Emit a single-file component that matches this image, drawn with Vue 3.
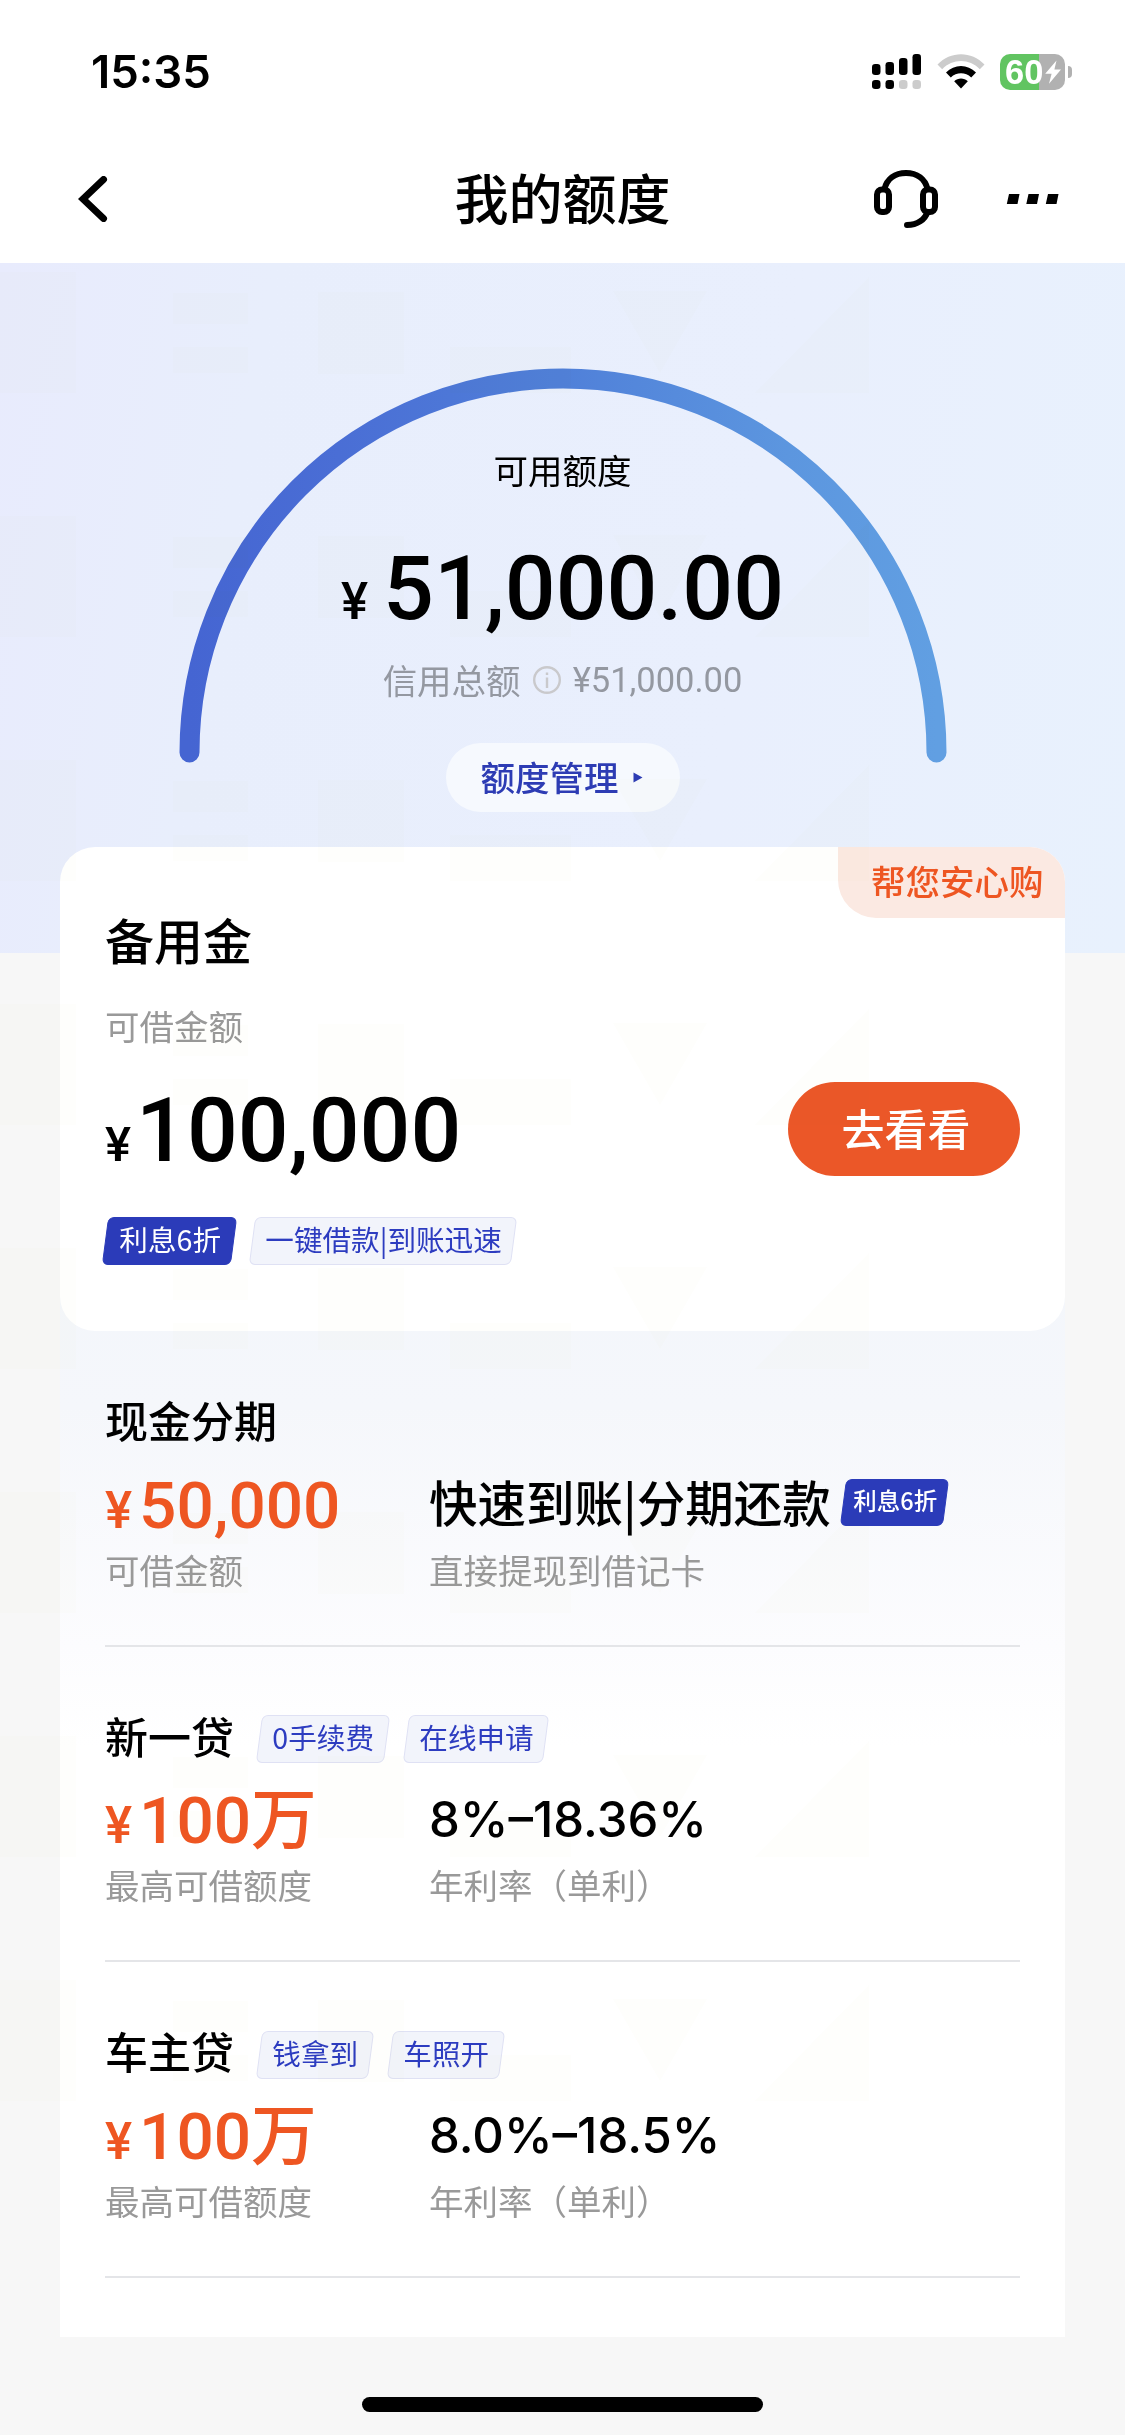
<script setup>
import { ref } from 'vue';

const signalBars = [11, 13, 17, 21];

const quota = ref({
  available: '51,000.00',
  total: '¥51,000.00',
});

const offers = ref([
  {
    name: '现金分期',
    tags: [],
    amount: '50,000',
    amountLabel: '可借金额',
    desc: '快速到账|分期还款',
    badge: '利息6折',
    descLabel: '直接提现到借记卡',
  },
  {
    name: '新一贷',
    tags: ['0手续费', '在线申请'],
    amount: '100万',
    amountLabel: '最高可借额度',
    rate: '8%–18.36%',
    descLabel: '年利率（单利）',
  },
  {
    name: '车主贷',
    tags: ['钱拿到', '车照开'],
    amount: '100万',
    amountLabel: '最高可借额度',
    rate: '8.0%–18.5%',
    descLabel: '年利率（单利）',
  },
]);
</script>

<template>
  <div class="page">
    <!-- Status bar -->
    <div class="status-bar">
      <span class="time">15:35</span>
      <div class="status-icons">
        <svg class="signal" viewBox="0 0 49 35">
          <rect
            v-for="(h, i) in signalBars"
            :key="'bar' + i"
            :x="i * 13.5"
            :y="21 - h"
            width="8.5"
            :height="h"
            rx="3.2"
          />
          <rect
            v-for="i in 4"
            :key="'dot' + i"
            :x="(i - 1) * 13.5"
            y="26"
            width="8.5"
            height="9"
            rx="3.2"
            :class="{ off: i > 2 }"
          />
        </svg>
        <svg class="wifi" viewBox="0 0 48 36">
          <path class="off" d="M0.5 10.6C13.5-3.3 34.5-3.3 47.5 10.6L42.8 15.2C32.4 4.4 15.6 4.4 5.2 15.2Z" />
          <path d="M9 18.6C17.3 9.9 30.7 9.9 39 18.6L34.2 23.5C28.5 17.9 19.5 17.9 13.8 23.5Z" />
          <path d="M17.2 27.2C21 23.6 27 23.6 30.8 27.2L24 34.5Z" />
        </svg>
        <div class="battery">
          <span class="battery-num">60</span>
          <svg class="bolt" viewBox="0 0 16 24">
            <path d="M11.5 0.5L0.2 13.8H6.6L4 23.8L16 9.6H9.4Z" />
          </svg>
        </div>
        <span class="battery-cap"></span>
      </div>
    </div>

    <!-- Nav -->
    <div class="nav">
      <svg class="back" viewBox="0 0 30 46">
        <path d="M25.5 3.5L5 23L25.5 42.5" />
      </svg>
      <h1 class="nav-title">我的额度</h1>
      <div class="nav-actions">
        <svg class="headset" viewBox="0 0 66 60">
          <rect x="4" y="20.5" width="12" height="22.5" rx="5" />
          <rect x="50" y="20.5" width="12" height="22.5" rx="5" />
          <path d="M11.5 20C14 10 22 4 33 4S52 10 54.5 20" />
          <path d="M54.5 43C52 50.5 44.5 56 34 56" />
        </svg>
        <svg class="more" viewBox="0 0 54 12">
          <path d="M3 1H13.5L11.5 11H0.8ZM22.5 1H33L31 11H20.3ZM42 1H52.5L50.5 11H39.8Z" />
        </svg>
      </div>
    </div>

    <!-- Quota gauge -->
    <section class="hero">
      <div class="gauge">
        <svg class="arc" viewBox="0 0 768 395">
          <defs>
            <linearGradient id="arcColor" x1="0" y1="0" x2="1" y2="0">
              <stop offset="0" stop-color="#4565d2" />
              <stop offset="0.2" stop-color="#4a6ed5" />
              <stop offset="0.5" stop-color="#5080d9" />
              <stop offset="0.8" stop-color="#5c96df" />
              <stop offset="1" stop-color="#619fe2" />
            </linearGradient>
          </defs>
          <path d="M10.5 384.5A373.5 374 0 0 1 757.5 384.5" stroke="url(#arcColor)" />
        </svg>
        <div class="gauge-body">
          <div class="gauge-label">可用额度</div>
          <div class="gauge-amount"><span class="yen">¥</span>{{ quota.available }}</div>
          <div class="gauge-total">
            <span>信用总额</span>
            <svg class="info" viewBox="0 0 28 28">
              <circle cx="14" cy="14" r="12.8" />
              <path d="M14 11.5V22" />
              <path d="M14 6.5V9" />
            </svg>
            <span class="total-num">{{ quota.total }}</span>
          </div>
          <button class="manage">
            额度管理
            <svg viewBox="0 0 10 11"><path d="M0.5 0.5L9.5 5.5L0.5 10.5Z" /></svg>
          </button>
        </div>
      </div>
    </section>

    <main class="panel">
      <!-- Reserve fund -->
      <section class="card">
        <div class="ribbon">帮您安心购</div>
        <h2 class="card-title">备用金</h2>
        <div class="card-label">可借金额</div>
        <div class="card-row">
          <div class="card-amount"><span class="yen">¥</span>100,000</div>
          <button class="go">去看看</button>
        </div>
        <div class="tags">
          <span class="tag solid"><i>利息6折</i></span>
          <span class="tag"><i>一键借款|到账迅速</i></span>
        </div>
      </section>

      <!-- Offers -->
      <section v-for="offer in offers" :key="offer.name" class="offer">
        <div class="offer-head">
          <h3 class="offer-name">{{ offer.name }}</h3>
          <span v-for="tag in offer.tags" :key="tag" class="tag"><i>{{ tag }}</i></span>
        </div>
        <div class="offer-grid">
          <div class="offer-amount"><span class="yen">¥</span>{{ offer.amount }}</div>
          <div v-if="offer.rate" class="offer-rate">{{ offer.rate }}</div>
          <div v-else class="offer-desc">
            {{ offer.desc }}
            <span class="tag solid small"><i>{{ offer.badge }}</i></span>
          </div>
          <div class="offer-label">{{ offer.amountLabel }}</div>
          <div class="offer-label">{{ offer.descLabel }}</div>
        </div>
      </section>
    </main>

    <div class="home-bar"></div>

    <!-- Faint repeating background marks -->
    <svg class="marks" viewBox="0 0 1125 2172">
      <defs>
        <pattern id="mark" width="1125" height="244" y="-27" patternUnits="userSpaceOnUse">
          <rect x="0" y="36" width="76" height="121" />
          <rect x="173" y="57" width="75" height="31" />
          <rect x="173" y="111" width="75" height="26" />
          <rect x="318" y="56" width="86" height="82" />
          <rect x="450" y="111" width="121" height="46" />
          <path d="M613 55H707L660 137Z" />
          <path d="M869 41V157H755Z" />
        </pattern>
      </defs>
      <rect width="1125" height="1900" fill="url(#mark)" />
    </svg>
  </div>
</template>

<style scoped>
.page {
  position: relative;
  width: 1125px;
  height: 2435px;
  overflow: hidden;
  background: #f7f7f7;
  color: #000;
  font-family: "Noto Sans CJK SC", sans-serif;
}

h1,
h2,
h3 {
  margin: 0;
  font-weight: 500;
}

button {
  border: none;
  font-family: inherit;
  cursor: pointer;
}

svg {
  display: block;
  flex: none;
}

/* status bar */
.status-bar {
  display: flex;
  align-items: center;
  justify-content: space-between;
  height: 143px;
  padding: 0 53px 0 91px;
  background: #fff;
}

.time {
  font-family: Inter, sans-serif;
  font-size: 45.5px;
  font-weight: 600;
  line-height: 50px;
}

.status-icons {
  display: flex;
  align-items: center;
}

.signal {
  width: 49px;
  height: 35px;
}

.off {
  fill: #ccc;
}

.wifi {
  width: 48px;
  height: 36px;
  margin-left: 16px;
}

.battery {
  display: flex;
  align-items: center;
  width: 65px;
  height: 36px;
  margin-left: 15px;
  border-radius: 10px;
  background: linear-gradient(to right, #61c461 39.5px, #b1b1b1 39.5px);
  box-sizing: border-box;
  padding-left: 5px;
}

.battery-num {
  width: 40px;
  color: #fff;
  font-family: "Liberation Sans", sans-serif;
  font-size: 34.5px;
  font-weight: 700;
  line-height: 36px;
}

.bolt {
  width: 16px;
  height: 24px;
  fill: #fff;
}

.battery-cap {
  width: 4px;
  height: 12px;
  margin-left: 3px;
  border-radius: 0 4px 4px 0;
  background: #b1b1b1;
}

/* nav */
.nav {
  display: grid;
  grid-template-columns: 1fr auto 1fr;
  align-items: center;
  height: 120px;
  padding: 0 65px 8px 78px;
  box-sizing: border-box;
  background: #fff;
}

.back {
  width: 30px;
  height: 46px;
  fill: none;
  stroke: #000;
  stroke-width: 7;
  stroke-linecap: round;
}

.nav-title {
  margin-right: 13px;
  padding-bottom: 5px;
  font-size: 54px;
  line-height: 64px;
}

.nav-actions {
  display: flex;
  align-items: center;
  justify-content: flex-end;
  gap: 67px;
}

.headset {
  width: 66px;
  height: 60px;
  fill: none;
  stroke: #000;
  stroke-width: 6;
  stroke-linecap: round;
}

.more {
  width: 54px;
  height: 12px;
}

.yen {
  line-height: 1;
}

/* gauge */
.hero {
  height: 690px;
  padding-top: 105px;
  box-sizing: border-box;
  background: linear-gradient(100deg, #e8ebfd 0%, #e8eefc 22%, #e9effd 65%, #e8f1fd 100%);
}

.gauge {
  display: grid;
  justify-content: center;
}

.arc,
.gauge-body {
  grid-area: 1 / 1;
}

.arc {
  width: 768px;
  height: 395px;
  fill: none;
  stroke-width: 20;
  stroke-linecap: round;
}

.gauge-body {
  display: flex;
  flex-direction: column;
  align-items: center;
  padding-top: 81px;
}

.gauge-label {
  font-size: 34.5px;
  line-height: 40px;
}

.gauge-amount {
  margin-top: 55px;
  font-family: Roboto, sans-serif;
  font-size: 89.5px;
  font-weight: 500;
  line-height: 90px;
}

.gauge-amount .yen {
  margin-right: 15px;
  font-size: 51px;
}

.gauge-total {
  display: flex;
  align-items: center;
  margin-top: 23px;
  color: #9498a1;
  font-size: 34.5px;
  line-height: 40px;
}

.info {
  width: 28px;
  height: 28px;
  margin: 2px 12px 0;
  fill: none;
  stroke: #c9c9cc;
  stroke-width: 2.4;
}

.total-num {
  padding-top: 3px;
  font-family: Roboto, sans-serif;
}

.manage {
  display: flex;
  align-items: center;
  gap: 14px;
  width: 234px;
  height: 69px;
  margin-top: 43px;
  padding: 0 0 3px 35px;
  border-radius: 35px;
  background: #f6f9fe;
  color: #2d3cb4;
  font-size: 34.5px;
  font-weight: 500;
  line-height: 40px;
}

.manage svg {
  width: 10px;
  height: 11px;
  margin-top: 2px;
  fill: #2d3cb4;
}

/* panel */
.panel {
  width: 1005px;
  margin: -106px auto 0;
  padding-bottom: 59.5px;
  background: linear-gradient(to bottom, transparent 400px, #f3f6fb 400px, #f5f7fb 560px, #fcfcfe 800px, #fff 900px);
}

.card {
  position: relative;
  height: 484px;
  padding: 64px 45px 0;
  box-sizing: border-box;
  overflow: hidden;
  border-radius: 35px;
  background: #fff;
}

.ribbon {
  position: absolute;
  top: 0;
  right: 0;
  width: 227px;
  height: 71px;
  padding-left: 33px;
  box-sizing: border-box;
  border-bottom-left-radius: 38px;
  background: #fbe9e2;
  color: #ee5622;
  font-size: 34.5px;
  font-weight: 500;
  line-height: 67px;
}

.card-title {
  font-size: 49px;
  line-height: 56px;
}

.card-label {
  margin-top: 38px;
  color: #999;
  font-size: 34.5px;
  line-height: 40px;
}

.card-row {
  display: flex;
  align-items: center;
  justify-content: space-between;
  margin-top: 37px;
}

.card-amount {
  padding-top: 3px;
  font-family: Roboto, sans-serif;
  font-size: 89.5px;
  font-weight: 500;
  line-height: 90px;
}

.card-amount .yen {
  margin-right: 5px;
  font-size: 49px;
}

.go {
  width: 232px;
  height: 94px;
  padding: 0 0 5px 4px;
  border-radius: 47px;
  background: #eb5728;
  color: #fff;
  font-size: 43px;
  font-weight: 500;
  line-height: 50px;
}

/* tags */
.tags {
  display: flex;
  gap: 18px;
  margin-top: 41px;
}

.tag {
  height: 48px;
  padding: 0 12px;
  box-sizing: border-box;
  border: 1.5px solid #dfe1f4;
  border-radius: 6px;
  background: #f2f4fb;
  color: #2d3cc0;
  font-size: 28.6px;
  line-height: 41px;
  white-space: nowrap;
  transform: skewX(-7.5deg);
}

.tag i {
  display: block;
  font-style: normal;
  transform: skewX(7.5deg);
}

.tag.solid {
  padding: 0 12.5px;
  border-color: #2b3bb9;
  background: #2b3bb9;
  color: #fff;
}

.tag.small {
  height: 47px;
  padding: 0 8.5px;
  font-size: 23.5px;
}

/* offers */
.offer {
  height: 315.5px;
  margin: 0 45px;
  padding-top: 68.5px;
  box-sizing: border-box;
  border-bottom: 2px solid #e4e5e8;
}

.offer-head {
  display: flex;
  align-items: center;
  height: 48px;
  margin-bottom: 28px;
}

.offer-head .tag {
  margin-right: 19px;
}

.offer-name {
  margin-right: 25px;
  padding-bottom: 9px;
  font-size: 43px;
  line-height: 48px;
}

.offer-grid {
  display: grid;
  grid-template-columns: 324px 1fr;
  row-gap: 13px;
}

.offer-amount {
  color: #ee5622;
  font-family: Roboto, "Noto Sans CJK SC", sans-serif;
  font-size: 65.7px;
  font-weight: 500;
  line-height: 60px;
}

.offer-amount .yen {
  margin-right: 7px;
  font-size: 51px;
}

.offer-desc {
  display: flex;
  align-items: center;
  gap: 12px;
  padding-bottom: 10px;
  font-size: 48.5px;
  font-weight: 500;
  line-height: 50px;
  white-space: nowrap;
}

.offer-desc .tag {
  margin-top: 3px;
  font-weight: 500;
}

.offer-rate {
  font-family: Inter, sans-serif;
  font-size: 49px;
  font-weight: 500;
  line-height: 58px;
}

.offer-label {
  color: #999;
  font-size: 34.5px;
  line-height: 40px;
}

.home-bar {
  width: 401px;
  height: 15px;
  margin: 60px auto 0;
  border-radius: 8px;
  background: #000;
}

.marks {
  position: absolute;
  top: 263px;
  left: 0;
  width: 1125px;
  height: 2172px;
  fill: #fefefc;
  mix-blend-mode: multiply;
  pointer-events: none;
}
</style>

<style>
body {
  margin: 0;
}
</style>
